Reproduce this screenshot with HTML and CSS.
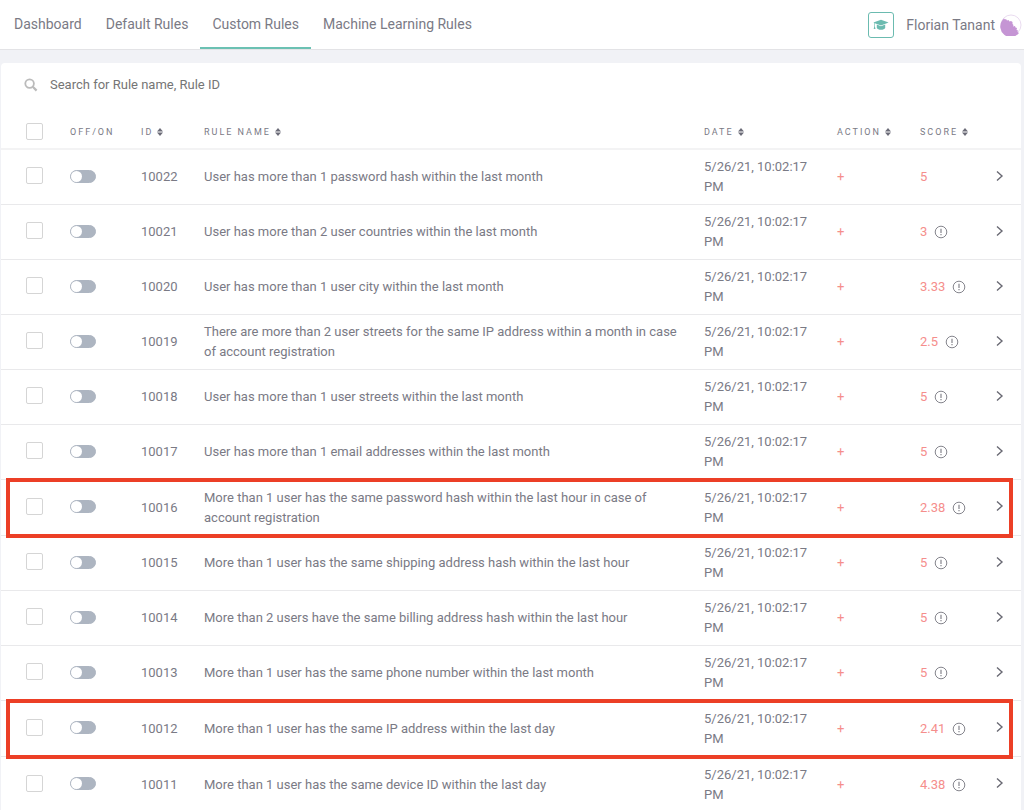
FILE: index.html
```html
<!DOCTYPE html>
<html lang="en">
<head>
<meta charset="utf-8">
<meta name="viewport" content="width=device-width, initial-scale=1">
<title>Custom Rules</title>
<link rel="stylesheet" href="styles.css">
</head>
<body>
<svg class="sprite" aria-hidden="true">
  <symbol id="sort" viewBox="0 0 6 8"><path d="M3 0 6 3.4H0zM3 8 0 4.6h6z"/></symbol>
  <symbol id="chevron" viewBox="0 0 10 12"><path d="M2 1.5 7 6 2 10.5" fill="none" stroke="currentColor" stroke-width="1.4"/></symbol>
  <symbol id="info" viewBox="0 0 14 14"><circle cx="7" cy="7" r="5.8" fill="none" stroke="currentColor" stroke-width="1"/><path d="M7 3.8v4.2M7 9v1.2" fill="none" stroke="currentColor" stroke-width="1.2"/></symbol>
</svg>
<header class="topbar">
  <nav class="tabs">
    <a class="tab" href="#">Dashboard</a>
    <a class="tab" href="#">Default Rules</a>
    <a class="tab tab-active" href="#" aria-current="page">Custom Rules</a>
    <a class="tab" href="#">Machine Learning Rules</a>
  </nav>
  <div class="account">
    <button class="academy" type="button" aria-label="Academy">
      <svg width="16" height="12" viewBox="0 0 16 12"><path d="M8 .8 15.6 3.6 8 6.4 1.9 4.2v3.2l.6 2.6H.7l.6-2.7V4L.4 3.6z"/><path d="M3.8 5.600 8 7.200 12.200 5.600v3.400C11.600 10 10 10.800 8 10.800S4.400 10 3.800 9z"/></svg>
    </button>
    <span class="user">Florian Tanant</span>
    <svg class="avatar" width="22" height="22" viewBox="0 0 22 22"><circle cx="11" cy="11" r="10" fill="#fff" stroke="#eadcf0"/><path d="M2.500 6 4 4.500 5 5.500 6 5l1 1.500L8.500 6l1 1.500 1.500-.5 1.500 1v2l1 1-.5 1.500 2-.5.500 1.500 1.500.5-.5 2 1.500.5-.5 1.500 1.500 1A10 10 0 1 1 2.500 6z" fill="#c595d4"/></svg>
  </div>
</header>
<main class="card">
  <label class="search">
    <svg width="14" height="14" viewBox="0 0 14 14"><circle cx="5.600" cy="5.600" r="4.300" fill="none" stroke="currentColor" stroke-width="1.800"/><path d="M8.800 8.800 12.600 12.600" stroke="currentColor" stroke-width="2.200"/></svg>
    <input class="search-input" type="text" placeholder="Search for Rule name, Rule ID" aria-label="Search rules">
  </label>
  <table class="rules">
    <colgroup><col class="col-check"><col class="col-switch"><col class="col-id"><col><col class="col-date"><col class="col-action"><col class="col-score"><col class="col-open"></colgroup>
    <thead>
      <tr><th class="check"><input class="box" type="checkbox" aria-label="Select all"></th><th>OFF/ON</th><th>ID<svg class="sort"><use href="#sort"/></svg></th><th>RULE NAME<svg class="sort"><use href="#sort"/></svg></th><th>DATE<svg class="sort"><use href="#sort"/></svg></th><th>ACTION<svg class="sort"><use href="#sort"/></svg></th><th>SCORE<svg class="sort"><use href="#sort"/></svg></th><th></th></tr>
    </thead>
    <tbody>
      <tr><td class="check"><input class="box" type="checkbox" aria-label="Select 10022"></td><td class="toggle"><input class="switch" type="checkbox" role="switch" aria-label="Enable 10022"></td><td>10022</td><td class="name">User has more than 1 password hash within the last month</td><td class="date">5/26/21, 10:02:17 PM</td><td class="accent">+</td><td><div class="score">5</div></td><td class="action"><button class="open" type="button" aria-label="Open 10022"><svg><use href="#chevron"/></svg></button></td></tr>
      <tr><td class="check"><input class="box" type="checkbox" aria-label="Select 10021"></td><td class="toggle"><input class="switch" type="checkbox" role="switch" aria-label="Enable 10021"></td><td>10021</td><td class="name">User has more than 2 user countries within the last month</td><td class="date">5/26/21, 10:02:17 PM</td><td class="accent">+</td><td><div class="score">3<svg class="info"><use href="#info"/></svg></div></td><td class="action"><button class="open" type="button" aria-label="Open 10021"><svg><use href="#chevron"/></svg></button></td></tr>
      <tr><td class="check"><input class="box" type="checkbox" aria-label="Select 10020"></td><td class="toggle"><input class="switch" type="checkbox" role="switch" aria-label="Enable 10020"></td><td>10020</td><td class="name">User has more than 1 user city within the last month</td><td class="date">5/26/21, 10:02:17 PM</td><td class="accent">+</td><td><div class="score">3.33<svg class="info"><use href="#info"/></svg></div></td><td class="action"><button class="open" type="button" aria-label="Open 10020"><svg><use href="#chevron"/></svg></button></td></tr>
      <tr><td class="check"><input class="box" type="checkbox" aria-label="Select 10019"></td><td class="toggle"><input class="switch" type="checkbox" role="switch" aria-label="Enable 10019"></td><td>10019</td><td class="name">There are more than 2 user streets for the same IP address within a month in case of account registration</td><td class="date">5/26/21, 10:02:17 PM</td><td class="accent">+</td><td><div class="score">2.5<svg class="info"><use href="#info"/></svg></div></td><td class="action"><button class="open" type="button" aria-label="Open 10019"><svg><use href="#chevron"/></svg></button></td></tr>
      <tr><td class="check"><input class="box" type="checkbox" aria-label="Select 10018"></td><td class="toggle"><input class="switch" type="checkbox" role="switch" aria-label="Enable 10018"></td><td>10018</td><td class="name">User has more than 1 user streets within the last month</td><td class="date">5/26/21, 10:02:17 PM</td><td class="accent">+</td><td><div class="score">5<svg class="info"><use href="#info"/></svg></div></td><td class="action"><button class="open" type="button" aria-label="Open 10018"><svg><use href="#chevron"/></svg></button></td></tr>
      <tr><td class="check"><input class="box" type="checkbox" aria-label="Select 10017"></td><td class="toggle"><input class="switch" type="checkbox" role="switch" aria-label="Enable 10017"></td><td>10017</td><td class="name">User has more than 1 email addresses within the last month</td><td class="date">5/26/21, 10:02:17 PM</td><td class="accent">+</td><td><div class="score">5<svg class="info"><use href="#info"/></svg></div></td><td class="action"><button class="open" type="button" aria-label="Open 10017"><svg><use href="#chevron"/></svg></button></td></tr>
      <tr class="marked"><td class="check"><input class="box" type="checkbox" aria-label="Select 10016"></td><td class="toggle"><input class="switch" type="checkbox" role="switch" aria-label="Enable 10016"></td><td>10016</td><td class="name">More than 1 user has the same password hash within the last hour in case of account registration</td><td class="date">5/26/21, 10:02:17 PM</td><td class="accent">+</td><td><div class="score">2.38<svg class="info"><use href="#info"/></svg></div></td><td class="action"><button class="open" type="button" aria-label="Open 10016"><svg><use href="#chevron"/></svg></button></td></tr>
      <tr><td class="check"><input class="box" type="checkbox" aria-label="Select 10015"></td><td class="toggle"><input class="switch" type="checkbox" role="switch" aria-label="Enable 10015"></td><td>10015</td><td class="name">More than 1 user has the same shipping address hash within the last hour</td><td class="date">5/26/21, 10:02:17 PM</td><td class="accent">+</td><td><div class="score">5<svg class="info"><use href="#info"/></svg></div></td><td class="action"><button class="open" type="button" aria-label="Open 10015"><svg><use href="#chevron"/></svg></button></td></tr>
      <tr><td class="check"><input class="box" type="checkbox" aria-label="Select 10014"></td><td class="toggle"><input class="switch" type="checkbox" role="switch" aria-label="Enable 10014"></td><td>10014</td><td class="name">More than 2 users have the same billing address hash within the last hour</td><td class="date">5/26/21, 10:02:17 PM</td><td class="accent">+</td><td><div class="score">5<svg class="info"><use href="#info"/></svg></div></td><td class="action"><button class="open" type="button" aria-label="Open 10014"><svg><use href="#chevron"/></svg></button></td></tr>
      <tr><td class="check"><input class="box" type="checkbox" aria-label="Select 10013"></td><td class="toggle"><input class="switch" type="checkbox" role="switch" aria-label="Enable 10013"></td><td>10013</td><td class="name">More than 1 user has the same phone number within the last month</td><td class="date">5/26/21, 10:02:17 PM</td><td class="accent">+</td><td><div class="score">5<svg class="info"><use href="#info"/></svg></div></td><td class="action"><button class="open" type="button" aria-label="Open 10013"><svg><use href="#chevron"/></svg></button></td></tr>
      <tr class="marked"><td class="check"><input class="box" type="checkbox" aria-label="Select 10012"></td><td class="toggle"><input class="switch" type="checkbox" role="switch" aria-label="Enable 10012"></td><td>10012</td><td class="name">More than 1 user has the same IP address within the last day</td><td class="date">5/26/21, 10:02:17 PM</td><td class="accent">+</td><td><div class="score">2.41<svg class="info"><use href="#info"/></svg></div></td><td class="action"><button class="open" type="button" aria-label="Open 10012"><svg><use href="#chevron"/></svg></button></td></tr>
      <tr><td class="check"><input class="box" type="checkbox" aria-label="Select 10011"></td><td class="toggle"><input class="switch" type="checkbox" role="switch" aria-label="Enable 10011"></td><td>10011</td><td class="name">More than 1 user has the same device ID within the last day</td><td class="date">5/26/21, 10:02:17 PM</td><td class="accent">+</td><td><div class="score">4.38<svg class="info"><use href="#info"/></svg></div></td><td class="action"><button class="open" type="button" aria-label="Open 10011"><svg><use href="#chevron"/></svg></button></td></tr>
    </tbody>
  </table>
</main>
</body>
</html>
```
FILE: styles.css
```css
* { box-sizing: border-box; }
body {
  margin: 0;
  background: #f1f2f6;
  color: #7a7a85;
  font: 13px/20px Roboto, "Liberation Sans", sans-serif;
}
button, input { margin: 0; font: inherit; color: inherit; }
button { padding: 0; background: none; border: 0; cursor: pointer; }
.sprite { display: none; }

.topbar {
  display: flex;
  justify-content: space-between;
  height: 50px;
  padding: 0 2px;
  background: #fff;
  border-bottom: 1px solid #e3e3e6;
  font-size: 14px;
}
.tabs { display: flex; }
.tab {
  display: flex;
  align-items: center;
  padding: 0 12px;
  border-bottom: 2px solid transparent;
  color: inherit;
  text-decoration: none;
}
.tab-active { border-color: #6bc1b3; }
.account { display: flex; align-items: center; }
.academy {
  display: grid;
  place-items: center;
  width: 26px;
  height: 26px;
  margin-right: 12px;
  border: 1px solid #6bbbb0;
  border-radius: 3px;
  fill: #6bbbb0;
}
.avatar { margin-left: 5px; }

.card {
  margin: 13px 3px 0 1px;
  background: #fff;
  border-radius: 4px 4px 0 0;
}
.search {
  display: flex;
  align-items: center;
  gap: 12px;
  height: 42px;
  padding: 2px 24px 0 23px;
  color: #bbb;
}
.search-input {
  flex: 1;
  border: 0;
  outline: 0;
  padding: 0;
  background: none;
  color: #757575;
}
.search-input::placeholder { color: #757575; opacity: 1; }

.rules { width: 100%; table-layout: fixed; border-collapse: separate; border-spacing: 0; }
.col-check { width: 69px; }
.col-switch { width: 71px; }
.col-id { width: 63px; }
.col-date { width: 133px; }
.col-action { width: 83px; }
.col-score { width: 75px; }
.col-open { width: 26px; }
.rules th {
  height: 45px;
  padding: 10px 0 0;
  border-bottom: 2px solid #f3f3f4;
  font-size: 9px;
  font-weight: 400;
  letter-spacing: 2px;
  text-align: left;
  white-space: nowrap;
}
.rules td { height: 55px; padding: 0; border-bottom: 1px solid #e9e9eb; }
.rules tr:last-child td { border-bottom: 0; }
.rules .check { padding-left: 25px; }
.rules td.check, .rules .action { padding-bottom: 3px; }
.rules .toggle { padding-bottom: 2px; }
.rules .name { padding-right: 24px; }
.rules .date { padding-right: 16px; }
.sort { width: 6px; height: 8px; margin-left: 4px; fill: #6c6c78; vertical-align: -1px; }
.accent, .score { color: #f58e8c; }
.score { display: flex; align-items: center; gap: 7px; }
.info { width: 14px; height: 14px; color: #85858d; }
.box {
  display: block;
  appearance: none;
  width: 17px;
  height: 17px;
  border: 1px solid #d5d5d5;
  border-radius: 2px;
  background: #fff;
}
.switch {
  display: block;
  appearance: none;
  width: 26px;
  height: 13px;
  border: 1px solid #adb5c1;
  border-radius: 7px;
  background: #adb5c1;
}
.switch::before {
  content: "";
  display: block;
  width: 11px;
  height: 11px;
  border-radius: 50%;
  background: #fff;
}
.switch:checked::before { margin-left: auto; }
.open { display: block; color: #696973; }
.open svg { display: block; width: 10px; height: 12px; }
.marked { position: relative; }
.rules .marked td { height: 56px; }
.marked .check::after {
  content: "";
  position: absolute;
  inset: -2px 8px -2px 5px;
  border: 4px solid #ec3f26;
  pointer-events: none;
}
```
